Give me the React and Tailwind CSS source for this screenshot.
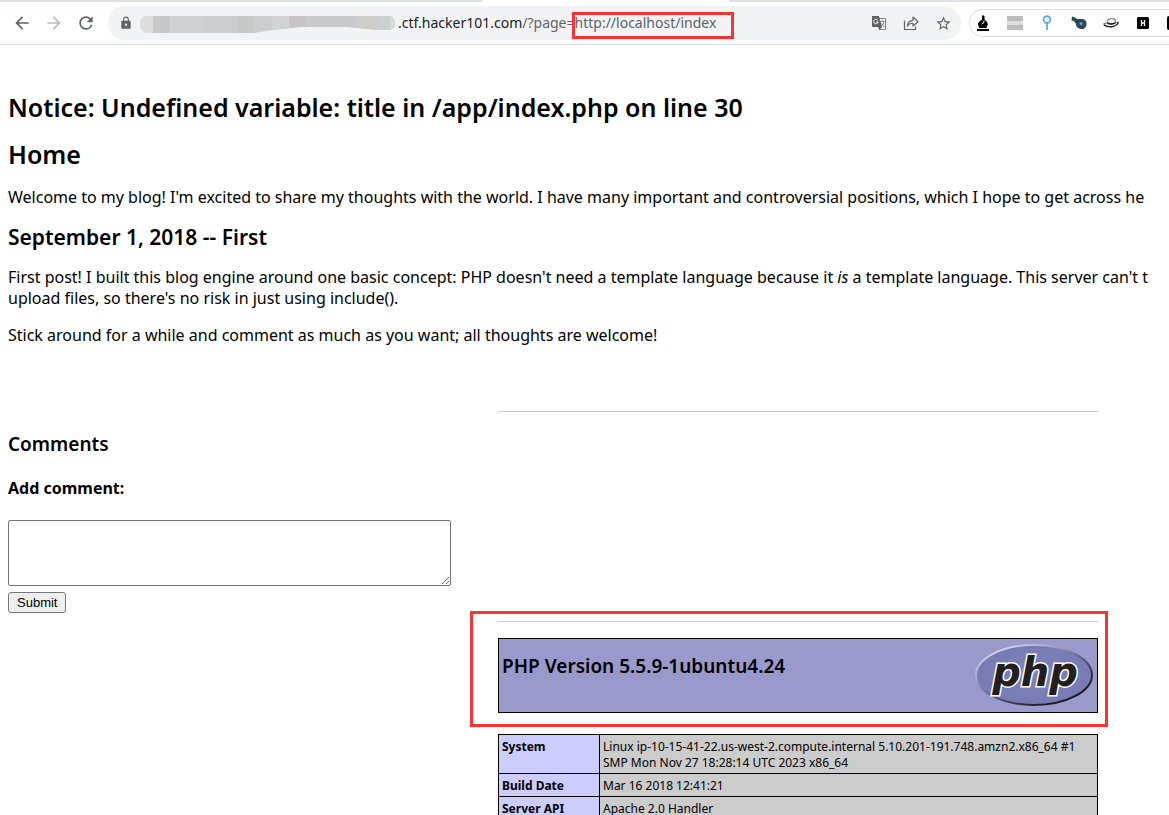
import React from 'react';
import { MdArrowBack, MdArrowForward, MdRefresh, MdLock, MdStarBorder } from 'react-icons/md';

const info = [
  { label: 'System', value: 'Linux ip-10-15-41-22.us-west-2.compute.internal 5.10.201-191.748.amzn2.x86_64 #1 SMP Mon Nov 27 18:28:14 UTC 2023 x86_64' },
  { label: 'Build Date', value: 'Mar 16 2018 12:41:21' },
  { label: 'Server API', value: 'Apache 2.0 Handler' },
];

// pixelated part of the host name
const MaskedHost = () => (
  <svg width="256" height="18" viewBox="0 0 256 18" className="mt-1 mr-[2px] shrink-0" aria-hidden="true">
    <defs>
      <clipPath id="mask">
        <path d="M5 0H251Q256 3 255 9Q254 14 248 14H238L208 11H160L132 14L114 17H6Q0 14 0 8Q0 2 5 0Z" />
      </clipPath>
    </defs>
    <g clipPath="url(#mask)" shapeRendering="crispEdges">
      <rect width="256" height="18" fill="#cbcccd" />
      <rect width="13" height="18" fill="#dcdcdc" />
      <rect x="13" width="17" height="18" fill="#c5c9cc" />
      <rect x="30" width="34" height="18" fill="#d0d1d5" />
      <rect x="64" width="34" height="18" fill="#cccdcf" />
      <rect x="98" width="17" height="18" fill="#c7c9c9" />
      <rect x="132" width="17" height="18" fill="#d0d2d3" />
      <rect x="149" width="17" height="18" fill="#c6c4c4" />
      <rect x="166" width="17" height="18" fill="#cac9ce" />
      <rect x="183" width="34" height="18" fill="#c9cace" />
      <rect x="217" width="21" height="18" fill="#cecdcb" />
      <rect x="238" width="12" height="18" fill="#cbd0d3" />
      <rect x="250" width="6" height="18" fill="#d9d9d9" />
    </g>
  </svg>
);

const TranslateIcon = () => (
  <svg width="16" height="16" viewBox="0 0 16 16">
    <path d="M6 3.5H14.5V14.5H8" fill="none" stroke="#80868b" />
    <path d="M1 1H8L11 12H2Q1 12 1 11Z" fill="#5f6368" />
    <path d="M7 12H11L8.500 15Z" fill="#5f6368" />
    <path d="M7 5.500A2.300 2.300 0 1 0 7.200 7H5" fill="none" stroke="#f1f3f4" />
    <path d="M9.500 6.500H13.500M11.500 5.500V6.500M13 6.500Q12.500 9.500 10.500 11M10.500 8.500L13.500 12" fill="none" stroke="#80868b" />
  </svg>
);

const ShareIcon = () => (
  <svg width="16" height="16" viewBox="0 0 16 16" fill="none" stroke="#5f6368" strokeWidth="1.200">
    <path d="M1.500 5.500V14.500H12.500V11.500" />
    <path d="M4.500 11Q5 5.500 10 5.300V2L15 6.700L10 11V8.300Q6.500 8 4.500 11Z" strokeLinejoin="round" />
  </svg>
);

const BurpIcon = () => (
  <svg width="16" height="18" viewBox="0 0 16 18" className="shrink-0">
    <path d="M7.500 1L9.500 2V5.500L11.500 7.500C13.500 9.500 13 12 10.500 13.500H5C2.500 12 2.500 9 4.500 7.500L7 5.500V3.500Z" fill="#000" />
    <path d="M6.500 10Q9.500 9.500 9 6.500" stroke="#fff" fill="none" />
    <path d="M4 13H12V14H4ZM2 15H14V17H2Z" fill="#000" />
  </svg>
);

const BarsIcon = () => (
  <svg width="16" height="14" viewBox="0 0 16 14" className="shrink-0">
    <rect width="16" height="14" fill="#bdbdbd" />
    <rect y="5" width="16" height="4" fill="#dedede" />
  </svg>
);

const PinIcon = () => (
  <svg width="16" height="16" viewBox="0 0 16 16" fill="none" stroke="#4f9ff5" strokeWidth="1.600" className="shrink-0">
    <circle cx="8" cy="4.500" r="3.400" />
    <path d="M8 8V15" />
  </svg>
);

const WhistleIcon = () => (
  <svg width="16" height="14" viewBox="0 0 16 14" className="shrink-0">
    <path d="M1 0.500L4 1.500L6 3H12C15 4 16 6 15.500 9C14.500 12.500 12 13.500 9.500 13C6.500 12.500 5 10.500 5 8L3 5L0.500 4.500Z" fill="#28495c" />
    <circle cx="10" cy="7.500" r="1.500" fill="#7fa0b3" />
  </svg>
);

const HatIcon = () => (
  <svg width="16" height="12" viewBox="0 0 16 12" className="shrink-0">
    <path d="M0.500 7Q3 5.500 4.500 6L5 2.500Q8 1 12 2L12.500 5.500L15.500 5Q15 8 10.500 9.300Q4 10.500 0.500 7Z" fill="#f4f4f4" stroke="#444" strokeWidth="0.800" />
    <path d="M4.300 5.500Q8 7.300 12.400 5.200V6.800Q8 8.600 4.300 7Z" fill="#111" />
    <path d="M1 8Q5 11 10.500 9.500Q14 8.500 15.500 5.500" fill="none" stroke="#111" strokeWidth="1.200" />
  </svg>
);

const HackIcon = () => (
  <svg width="16" height="12" viewBox="-2 0 16 12" className="shrink-0">
    <rect width="12" height="12" rx="1.500" fill="#000" />
    <path d="M4.500 3V9M7.500 3V9M4.500 6H7.500" stroke="#fff" strokeWidth="1.300" />
  </svg>
);

const PhpLogo = () => (
  <svg width="120" height="64" viewBox="0 0 120 64" role="img" aria-label="PHP logo">
    <defs>
      <linearGradient id="rim" x1="0.200" y1="0" x2="0.850" y2="0.800">
        <stop offset="0" stopColor="#d8daf0" />
        <stop offset="0.300" stopColor="#a3a5cf" />
        <stop offset="0.600" stopColor="#5b5d86" />
        <stop offset="1" stopColor="#1c1b22" />
      </linearGradient>
      <radialGradient id="face">
        <stop offset="0" stopColor="#7f83bd" />
        <stop offset="1" stopColor="#777bb3" />
      </radialGradient>
    </defs>
    <ellipse cx="60" cy="32" rx="58" ry="30" fill="url(#face)" stroke="url(#rim)" strokeWidth="2" />
    <text
      x="61"
      y="43"
      textAnchor="middle"
      className="font-['DejaVu_Sans'] text-[40px] font-bold italic"
      fill="#231f20"
      stroke="#fff"
      strokeWidth="3"
      paintOrder="stroke"
    >
      php
    </text>
  </svg>
);

function Toolbar() {
  return (
    <header className="border-b border-[#dadce0] bg-white">
      <div className="flex h-[2px] justify-between">
        <div className="w-[483px] rounded-br bg-[#dee1e6]" />
        <div className="ml-[246px] flex-1 rounded-bl bg-[#dee1e6]" />
      </div>
      <div className="flex h-[42px] items-center overflow-hidden pl-3 text-[#5f6368]">
        <nav className="flex shrink-0 gap-3">
          <button aria-label="Back"><MdArrowBack size={20} /></button>
          <button aria-label="Forward" className="text-[#babcbe]"><MdArrowForward size={20} /></button>
          <button aria-label="Reload"><MdRefresh size={20} /></button>
        </nav>
        <div className="ml-3 flex h-[34px] min-w-0 flex-1 items-center rounded-full bg-[#f1f3f4] pr-[9px] pl-[11px]">
          <MdLock size={14} className="mr-[7px] shrink-0" />
          <MaskedHost />
          <div className="flex items-center text-sm whitespace-nowrap">
            <span className="text-[#202124]">.ctf.hacker101.com</span>
            <span>/?page=</span>
            <span className="relative">
              http://localhost/index
              <span className="absolute -top-[1px] -right-[18px] -bottom-[6px] -left-[3px] border-3 border-[#fa3434]" />
            </span>
          </div>
          <div className="ml-auto flex items-center gap-4">
            <button aria-label="Translate"><TranslateIcon /></button>
            <button aria-label="Share"><ShareIcon /></button>
            <button aria-label="Bookmark"><MdStarBorder size={17} /></button>
          </div>
        </div>
        <div className="ml-2 flex h-7 w-[200px] shrink-0 items-center gap-4 overflow-hidden rounded-l-full border border-r-0 border-[#dfe1e4] pl-[5px]">
          <BurpIcon />
          <BarsIcon />
          <PinIcon />
          <WhistleIcon />
          <HatIcon />
          <HackIcon />
          <div className="h-[14px] w-4 shrink-0 rounded-xs bg-black" />
        </div>
      </div>
    </header>
  );
}

function PhpInfo() {
  return (
    <section className="mx-auto w-[600px]">
      <div className="relative">
        <hr className="border-[#ccc]" />
        <div className="mt-4 flex h-[75px] justify-between border border-black bg-[#9999cc] px-[3px] pt-1">
          <h1 className="mt-[10px] text-[19px] leading-[26px] font-semibold">PHP Version 5.5.9-1ubuntu4.24</h1>
          <PhpLogo />
        </div>
        <div className="absolute -inset-x-7 -top-[10px] -right-[10px] -bottom-[14px] border-3 border-[#fa3434]" />
      </div>
      <table className="mt-[21px] w-full border-collapse text-xs leading-4">
        <tbody>
          {info.map((row) => (
            <tr key={row.label} className="align-top">
              <th scope="row" className="w-[101px] border border-black bg-[#ccccff] px-[3px] pt-1 pb-[2px] text-left font-bold">{row.label}</th>
              <td className="border border-black bg-[#cccccc] px-[3px] pt-1 pb-[2px]">{row.value}</td>
            </tr>
          ))}
        </tbody>
      </table>
    </section>
  );
}

export default function App() {
  return (
    <div className="h-screen overflow-hidden bg-white font-['Noto_Sans','Open_Sans',sans-serif] text-black">
      <Toolbar />
      {/* the phpinfo block is centred in a page wider than the window */}
      <main className="min-w-[1596px] px-2 pt-[45px] text-base leading-[21px]">
        <h1 className="text-[25px] leading-[34px] font-semibold">Notice: Undefined variable: title in /app/index.php on line 30</h1>
        <h1 className="mt-[13px] text-[25px] leading-[34px] font-semibold">Home</h1>
        <p className="mt-4">
          Welcome to my blog! I'm excited to share my thoughts with the world. I have many important and controversial positions, which I hope to get across he
        </p>
        <h2 className="mt-[15px] text-[21px] leading-[28px] font-semibold">September 1, 2018 -- First</h2>
        <p className="mt-4">
          First post! I built this blog engine around one basic concept: PHP doesn't need a template language because it <i>is</i> a template language. This server can't t
          <br />
          upload files, so there's no risk in just using include().
        </p>
        <p className="mt-4">Stick around for a while and comment as much as you want; all thoughts are welcome!</p>
        <hr className="mx-auto mt-[65px] w-[600px] border-[#ccc]" />
        <h3 className="mt-[19px] text-[19px] leading-[26px] font-semibold">Comments</h3>
        <form onSubmit={(e) => e.preventDefault()}>
          <label htmlFor="comment" className="mt-[21px] block font-bold">Add comment:</label>
          <textarea id="comment" className="mt-[21px] block h-[66px] w-[443px] rounded-xs border border-[#767676]" />
          <button className="mt-[6px] block h-[21px] rounded-[3px] border border-[#767676] bg-[#efefef] px-2 font-['Liberation_Sans',sans-serif] text-[13px] leading-[19px]">
            Submit
          </button>
        </form>
        <div className="mt-2">
          <PhpInfo />
        </div>
      </main>
    </div>
  );
}
